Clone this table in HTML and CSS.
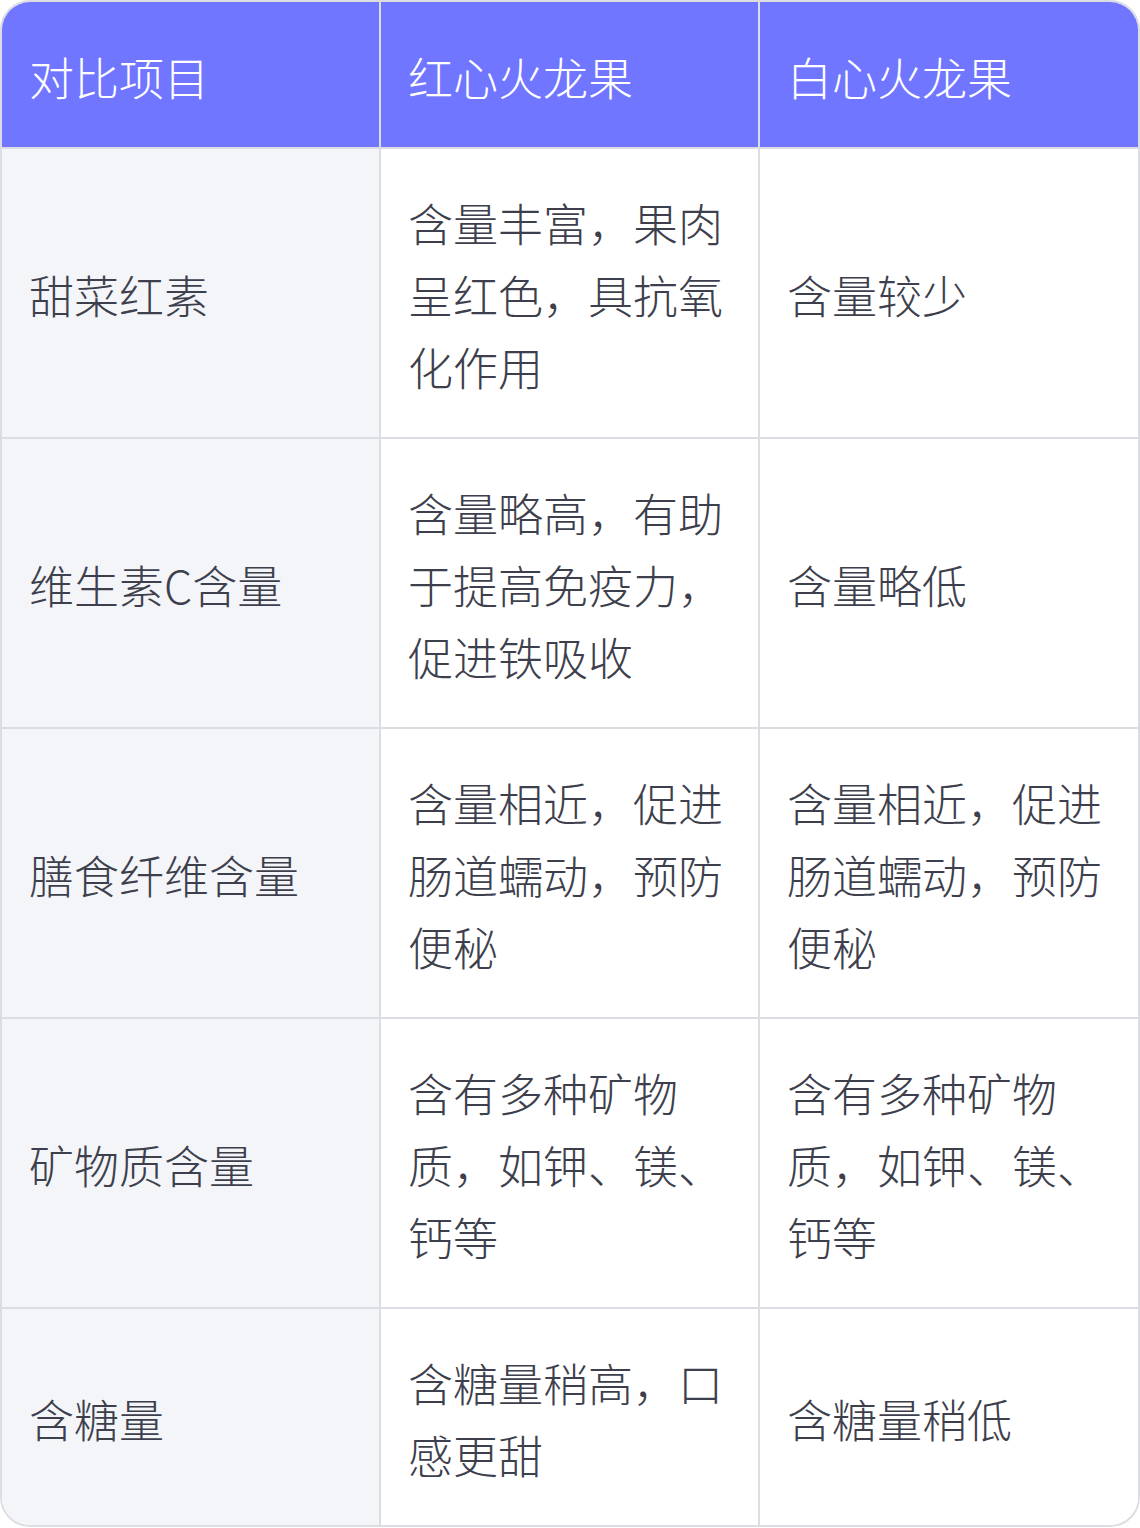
FILE: index.html
```html
<!DOCTYPE html>
<html lang="zh-CN">
<head>
<meta charset="utf-8">
<link rel="stylesheet" href="styles.css">
</head>
<body>
<div class="wrap">
<table class="cmp">
<colgroup><col class="c1"><col class="c2"><col class="c3"></colgroup>
<thead>
<tr><th>对比项目</th><th>红心火龙果</th><th>白心火龙果</th></tr>
</thead>
<tbody>
<tr><td>甜菜红素</td><td>含量丰富，果肉呈红色，具抗氧化作用</td><td>含量较少</td></tr>
<tr><td>维生素C含量</td><td>含量略高，有助于提高免疫力，促进铁吸收</td><td>含量略低</td></tr>
<tr><td>膳食纤维含量</td><td>含量相近，促进肠道蠕动，预防便秘</td><td>含量相近，促进肠道蠕动，预防便秘</td></tr>
<tr><td>矿物质含量</td><td>含有多种矿物质，如钾、镁、钙等</td><td>含有多种矿物质，如钾、镁、钙等</td></tr>
<tr><td>含糖量</td><td>含糖量稍高，口感更甜</td><td>含糖量稍低</td></tr>
</tbody>
</table>
</div>
</body>
</html>
```

FILE: styles.css
```css
html, body {
  margin: 0;
  padding: 0;
  background: #ffffff;
}
.wrap {
  width: 1140px;
  box-sizing: border-box;
  border: 2px solid #dcdde2;
  border-radius: 30px;
  overflow: hidden;
}
.cmp {
  width: 100%;
  border-collapse: separate;
  border-spacing: 0;
  table-layout: fixed;
  font-family: "Noto Sans CJK SC", "Noto Sans", sans-serif;
  font-size: 45px;
  line-height: 72px;
}
.c1 { width: 379px; }
.c2 { width: 379px; }
.c3 { width: 378px; }
.cmp th, .cmp td {
  padding: 38px 20px 34px 27px;
  text-align: left;
  vertical-align: middle;
  border-right: 2px solid #dcdde2;
  border-bottom: 2px solid #dcdde2;
  font-weight: 300;
}
.cmp th:last-child, .cmp td:last-child {
  border-right: none;
}
.cmp tbody tr:last-child td {
  border-bottom: none;
}
.cmp th {
  background: #7076ff;
  color: #ffffff;
  padding-top: 39px;
  padding-bottom: 34px;
}
.cmp td {
  color: #3d404c;
  background: #ffffff;
}
.cmp td:first-child {
  background: #f4f5f9;
}
```
